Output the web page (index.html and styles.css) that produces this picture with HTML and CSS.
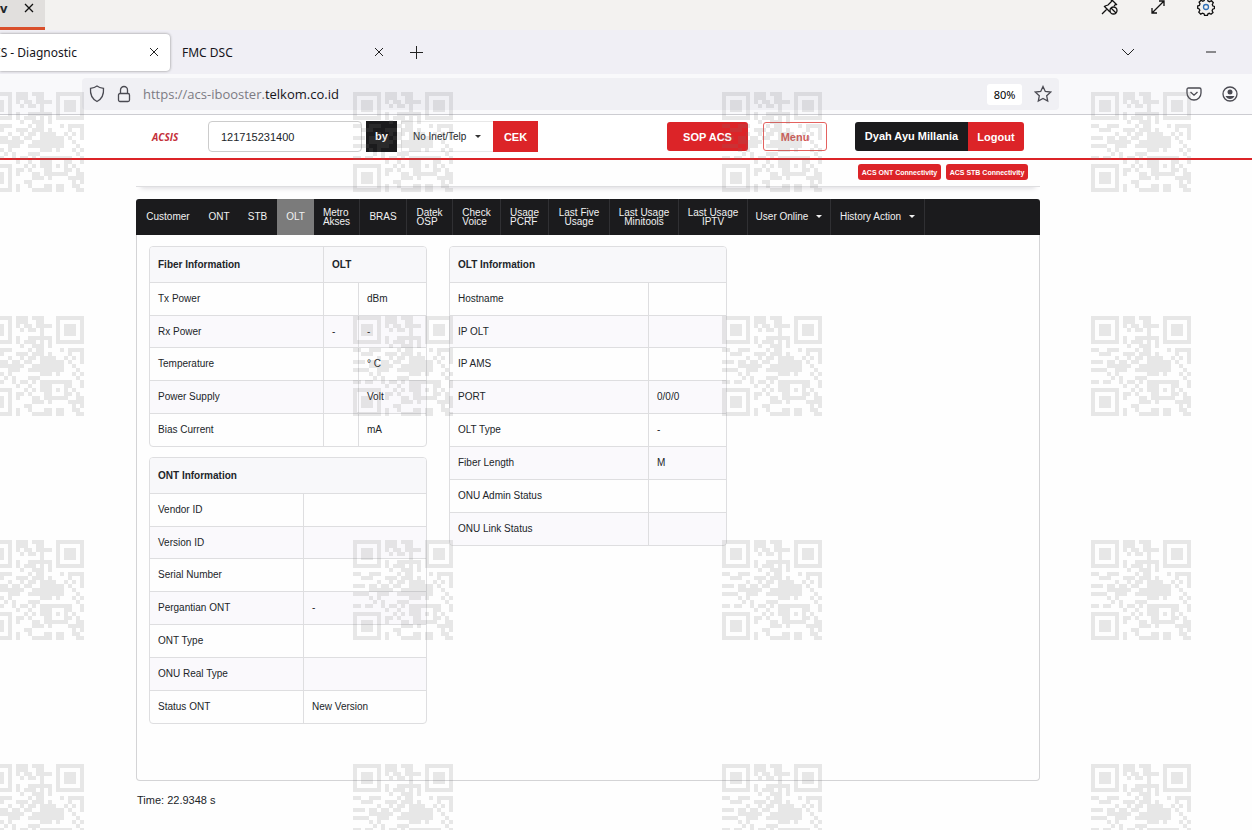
FILE: index.html
```
<!DOCTYPE html>
<html lang="id">
<head>
  <meta charset="UTF-8">
  <meta name="viewport" content="width=device-width, initial-scale=1.0">
  <title>ACSIS - Diagnostic</title>
  <link rel="stylesheet" href="styles.css">
</head>
<body>
  <!-- remote session bar -->
  <div class="session-bar">
    <div class="session-tab">
      <b>v</b>
      <button class="icon-btn" aria-label="Close session"><svg width="10" height="10" viewBox="0 0 10 10"><path d="M1 1l8 8M9 1l-8 8"/></svg></button>
    </div>
    <div class="session-tools">
      <button class="icon-btn" aria-label="Unpin"><svg width="18" height="18" viewBox="0 0 18 18"><path d="M1 16l5-5M3 8l6 6M4 8l3-1 4-4-1-1M10 1l6 6M15 6l-2 2"/><circle cx="12.500" cy="12.500" r="3.500"/><path d="M10 10l5 5"/></svg></button>
      <button class="icon-btn" aria-label="Full screen"><svg width="14" height="14" viewBox="0 0 14 14"><path d="M1 13L13 1M8 1h5v5M1 8v5h5"/></svg></button>
      <button class="icon-btn" aria-label="Settings"><svg width="18" height="18" viewBox="0 0 18 18"><path d="M7.500 1h3l.5 2 1.500.7 2-1 1.800 2-1 1.800.6 1.500 1.600.5v2l-1.800.7-.6 1.500.9 1.800-2 1.700-1.700-.9-1.300.5-.6 1.700h-2.800l-.6-1.800-1.500-.6-1.800 1-1.900-2 1-1.800-.6-1.400-1.500-.5v-2.400l1.700-.6.6-1.500-.9-1.700 2-2 1.700 1 1.400-.6z"/><circle class="blue" cx="9" cy="9" r="2.500"/></svg></button>
    </div>
  </div>

  <div class="tab-bar">
    <div class="tab active">
      <span>SIS - Diagnostic</span>
      <button class="icon-btn" aria-label="Close tab"><svg width="10" height="10" viewBox="0 0 10 10"><path d="M1 1l8 8M9 1l-8 8"/></svg></button>
    </div>
    <div class="tab">
      <span>FMC DSC</span>
      <button class="icon-btn" aria-label="Close tab"><svg width="10" height="10" viewBox="0 0 10 10"><path d="M1 1l8 8M9 1l-8 8"/></svg></button>
    </div>
    <button class="icon-btn new-tab" aria-label="New tab"><svg width="13" height="13" viewBox="0 0 13 13"><path d="M6.500 0v13M0 6.500h13"/></svg></button>
    <button class="icon-btn list-tabs" aria-label="List all tabs"><svg width="14" height="8" viewBox="0 0 14 8"><path d="M1 1l6 6 6-6"/></svg></button>
    <button class="icon-btn minimize" aria-label="Minimize"><svg width="10" height="2" viewBox="0 0 10 2"><path d="M0 1h10"/></svg></button>
  </div>

  <div class="url-bar">
    <div class="url-box">
      <svg width="16" height="18" viewBox="0 0 16 18"><path d="M8 1c2 1.600 4 2 6.500 2.300.5 6.200-1.500 10.700-6.500 13.200C3 14 1 9.500 1.500 3.300 4 3 6 2.600 8 1z"/></svg>
      <svg width="14" height="18" viewBox="0 0 14 18"><rect x="1.500" y="8.500" width="11" height="8" rx="1.500"/><path d="M3.500 8.500V5a3.500 3.500 0 0 1 7 0v3.500"/></svg>
      <span class="url">https://acs-ibooster.<b>telkom.co.id</b></span>
      <button class="zoom-level">80%</button>
      <button class="icon-btn" aria-label="Bookmark"><svg width="18" height="18" viewBox="0 0 18 18"><path d="M9 1.500l2.300 5 5.300.6-3.900 3.700 1 5.300L9 13.500l-4.700 2.600 1-5.300-3.900-3.700 5.300-.6z"/></svg></button>
    </div>
    <button class="icon-btn pocket" aria-label="Pocket"><svg width="16" height="14" viewBox="0 0 16 14"><path d="M2.500 1h11q1.500 0 1.500 1.500V6a7 7 0 0 1-14 0V2.500Q1 1 2.500 1zM4.500 5L8 8.200 11.500 5"/></svg></button>
    <button class="icon-btn" aria-label="Account"><svg width="16" height="16" viewBox="0 0 16 16"><circle cx="8" cy="8" r="7"/><circle class="solid" cx="8" cy="6" r="2.500"/><path class="solid" d="M3.500 10h9Q11 13 8 13t-4.500-3z"/></svg></button>
  </div>

  <header class="app-header">
    <a href="#" class="logo">ACSIS</a>
    <form class="search">
      <input type="text" value="121715231400" aria-label="Nomor">
      <span class="by">by</span>
      <div class="select-wrap">
        <select aria-label="Jenis nomor"><option>No Inet/Telp</option></select>
      </div>
      <button type="button" class="cek">CEK</button>
    </form>
    <button class="btn sop">SOP ACS</button>
    <button class="btn menu">Menu</button>
    <div class="user">
      <span class="user-name">Dyah Ayu Millania</span>
      <button class="logout">Logout</button>
    </div>
  </header>

  <main>
    <div class="status">
      <button>ACS ONT Connectivity</button>
      <button>ACS STB Connectivity</button>
    </div>

    <nav>
      <a href="#" class="w-customer">Customer</a>
      <a href="#" class="w-ont">ONT</a>
      <a href="#" class="w-stb">STB</a>
      <a href="#" class="w-olt current">OLT</a>
      <a href="#" class="w-short line">Metro<br>Akses</a>
      <a href="#" class="w-short line">BRAS</a>
      <a href="#" class="w-short line">Datek<br>OSP</a>
      <a href="#" class="w-mid line">Check<br>Voice</a>
      <a href="#" class="w-mid line">Usage<br>PCRF</a>
      <a href="#" class="w-five line">Last Five<br>Usage</a>
      <a href="#" class="w-last line">Last Usage<br>Minitools</a>
      <a href="#" class="w-last line">Last Usage<br>IPTV</a>
      <a href="#" class="w-online line">User Online <i class="caret"></i></a>
      <a href="#" class="w-history line">History Action <i class="caret"></i></a>
    </nav>

    <section class="panel">
      <div class="column">
        <table>
          <colgroup><col class="c-fiber"><col class="c-value"><col></colgroup>
          <thead><tr><th>Fiber Information</th><th colspan="2">OLT</th></tr></thead>
          <tbody>
            <tr><td>Tx Power</td><td></td><td>dBm</td></tr>
            <tr><td>Rx Power</td><td>-</td><td>-</td></tr>
            <tr><td>Temperature</td><td></td><td>° C</td></tr>
            <tr><td>Power Supply</td><td></td><td>Volt</td></tr>
            <tr><td>Bias Current</td><td></td><td>mA</td></tr>
          </tbody>
        </table>
        <table>
          <colgroup><col class="c-ont"><col></colgroup>
          <thead><tr><th colspan="2">ONT Information</th></tr></thead>
          <tbody>
            <tr><td>Vendor ID</td><td></td></tr>
            <tr><td>Version ID</td><td></td></tr>
            <tr><td>Serial Number</td><td></td></tr>
            <tr><td>Pergantian ONT</td><td>-</td></tr>
            <tr><td>ONT Type</td><td></td></tr>
            <tr><td>ONU Real Type</td><td></td></tr>
            <tr><td>Status ONT</td><td>New Version</td></tr>
          </tbody>
        </table>
      </div>
      <div class="column">
        <table>
          <colgroup><col class="c-olt"><col></colgroup>
          <thead><tr><th colspan="2">OLT Information</th></tr></thead>
          <tbody>
            <tr><td>Hostname</td><td></td></tr>
            <tr><td>IP OLT</td><td></td></tr>
            <tr><td>IP AMS</td><td></td></tr>
            <tr><td>PORT</td><td>0/0/0</td></tr>
            <tr><td>OLT Type</td><td>-</td></tr>
            <tr><td>Fiber Length</td><td>M</td></tr>
            <tr><td>ONU Admin Status</td><td></td></tr>
            <tr><td>ONU Link Status</td><td></td></tr>
          </tbody>
        </table>
      </div>
    </section>
    <p class="time">Time: 22.9348 s</p>
  </main>

  <!-- repeated QR watermark -->
  <svg class="watermark" aria-hidden="true">
    <defs>
      <pattern id="qr" x="-16" y="92" width="369" height="224" patternUnits="userSpaceOnUse">
        <path id="qr-cells" shape-rendering="crispEdges"/>
      </pattern>
    </defs>
    <rect width="100%" height="100%" fill="url(#qr)"/>
  </svg>
  <script src="watermark.js"></script>
</body>
</html>
```
FILE: styles.css
```
* {
  box-sizing: border-box;
}
body {
  margin: 0;
  min-height: 100vh;
  overflow: hidden;
  background: #fefefe;
  color: #212529;
  font-family: "Liberation Sans", Arial, sans-serif;
  font-size: 10px;
}
button {
  font-family: inherit;
  border: 0;
  padding: 0;
}
a {
  color: inherit;
  text-decoration: none;
}
svg {
  fill: none;
  stroke: #4a4a52;
  stroke-width: 1.3;
  flex: none;
}
.icon-btn {
  display: flex;
  background: none;
}

/* remote session bar */
.session-bar {
  height: 30px;
  display: flex;
  justify-content: space-between;
  background: #f3f2f0;
}
.session-bar svg {
  stroke: #111;
}
.session-bar .blue {
  stroke: #2f6fb5;
}
.session-tab {
  width: 45px;
  display: flex;
  justify-content: space-between;
  padding: 3px 11px 0 0;
  background: #e1dfdd;
  border-bottom: 3px solid #d94f2b;
  font-family: "Open Sans", sans-serif;
  font-size: 13px;
  line-height: 11px;
}
.session-tools {
  display: flex;
  align-items: center;
  gap: 32px;
  height: 13px;
  padding-right: 37px;
}

/* browser */
.tab-bar {
  height: 44px;
  display: flex;
  align-items: center;
  background: #f0eff5;
  font-family: "Noto Sans", sans-serif;
  font-size: 12px;
  color: #15141a;
}
.tab {
  width: 214px;
  display: flex;
  align-items: center;
  justify-content: space-between;
  padding-left: 12px;
}
.tab.active {
  width: 170px;
  height: 37px;
  padding: 0 11px 0 0;
  background: #fff;
  border-radius: 0 4px 4px 0;
  box-shadow: 0 0 3px #888;
}
.tab.active span {
  margin-left: -10px;
}
.tab-bar svg {
  stroke: #222;
  stroke-width: 1;
}
.new-tab {
  margin-left: 26px;
}
.list-tabs {
  margin-left: auto;
}
.minimize {
  margin: 0 36px 0 71px;
}
.url-bar {
  height: 41px;
  display: flex;
  align-items: center;
  padding: 0 14px 0 82px;
  background: #f9f9fb;
  border-bottom: 1px solid #ccccd1;
}
.url-box {
  flex: 1;
  height: 32px;
  display: flex;
  align-items: center;
  gap: 12px;
  padding: 0 7px;
  background: #f0f0f4;
  border-radius: 4px;
}
.url {
  flex: 1;
  font-family: "Open Sans", sans-serif;
  font-size: 13px;
  color: #7c7b83;
}
.url b {
  font-weight: normal;
  color: #15141a;
}
.zoom-level {
  width: 35px;
  height: 21px;
  background: #fff;
  border-radius: 3px;
  font-family: "Noto Sans", sans-serif;
  font-size: 11px;
}
.pocket {
  margin: 0 20px 0 127px;
}
svg .solid {
  fill: #4a4a52;
  stroke: none;
}

/* header */
.app-header {
  height: 45px;
  display: flex;
  align-items: center;
  padding: 0 228px 0 152px;
  background: #fff;
  border-bottom: 2px solid #dc2428;
}
.logo {
  width: 56px;
  color: #c4303a;
  font-family: "Open Sans", sans-serif;
  font-size: 10px;
  font-weight: bold;
  font-style: italic;
}
.search {
  display: flex;
  height: 31px;
}
.search input {
  width: 154px;
  padding: 0 12px;
  border: 1px solid #ccc;
  border-radius: 4px;
  background: #fff;
  font-family: inherit;
  font-size: 11px;
  color: #212529;
}
.by {
  width: 31px;
  margin: 0 4px;
  background: #1b1b1d;
  color: #fff;
  font-size: 11px;
  font-weight: bold;
  line-height: 30px;
  text-align: center;
}
.select-wrap {
  width: 92px;
  display: flex;
  align-items: center;
  border: 1px solid #e8e8e8;
  border-right: 0;
}
.select-wrap::after {
  content: "";
  margin-left: -18px;
  border: 3px solid transparent;
  border-top-color: #333;
  border-bottom: 0;
  pointer-events: none;
}
.search select {
  appearance: none;
  width: 91px;
  padding: 0 11px;
  border: 0;
  background: none;
  font-family: inherit;
  font-size: 10px;
  color: #212529;
}
.cek {
  width: 45px;
  background: #dc2428;
  color: #fff;
  font-size: 11px;
  font-weight: bold;
}
.btn {
  height: 29px;
  border-radius: 3px;
  font-size: 11px;
  font-weight: bold;
}
.sop {
  width: 81px;
  margin-left: auto;
  background: #dc2428;
  color: #fff;
}
.menu {
  width: 64px;
  margin: 0 28px 0 15px;
  background: #fff;
  border: 1px solid #e4625f;
  color: #d65c58;
}
.user {
  display: flex;
  height: 29px;
  border-radius: 3px;
  overflow: hidden;
  color: #fff;
  font-size: 11px;
  font-weight: bold;
}
.user-name {
  width: 113px;
  background: #1b1b1d;
  line-height: 29px;
  text-align: center;
}
.logout {
  width: 56px;
  background: #dc2428;
  color: inherit;
  font-size: inherit;
  font-weight: inherit;
}

/* content */
main {
  margin: 0 212px 0 136px;
}
.status {
  height: 27px;
  display: flex;
  justify-content: flex-end;
  gap: 5px;
  padding: 4px 12px 0 0;
  border-bottom: 1px solid #dedee0;
  box-shadow: 0 6px 5px -5px #d9d7dc;
}
.status button {
  width: 83px;
  height: 16px;
  background: #dc2428;
  border-radius: 3px;
  color: #fff;
  font-size: 7px;
  font-weight: bold;
  white-space: nowrap;
}
.status button:last-child {
  width: 82px;
}
nav {
  height: 36px;
  margin-top: 12px;
  display: flex;
  background: #1b1b1d;
  border-radius: 3px 3px 0 0;
  color: #f1f1f1;
  line-height: 9px;
}
nav a {
  display: flex;
  align-items: center;
  justify-content: center;
  padding-bottom: 1px;
  white-space: nowrap;
}
nav .line {
  border-right: 1px solid #303033;
}
nav .current {
  background: #7b7b7b;
}
.w-customer { width: 64px; }
.w-ont { width: 38px; }
.w-stb { width: 39px; }
.w-olt { width: 37px; }
.w-short { width: 46px; }
.w-short + .w-short { width: 47px; }
.w-short + .w-short + .w-short { width: 46px; }
.w-mid { width: 48px; }
.w-five { width: 61px; text-align: center; }
.w-last { width: 69px; text-align: center; }
.w-online { width: 83px; }
.w-history { width: 94px; }
.caret {
  margin-left: 8px;
  border: 3px solid transparent;
  border-top-color: #f1f1f1;
  border-bottom: 0;
}
.panel {
  display: flex;
  gap: 22px;
  padding: 11px 12px 56px;
  border: 1px solid #d4d4d6;
  border-top: 0;
  border-radius: 0 0 4px 4px;
}
.column {
  width: 278px;
}
table {
  width: 100%;
  margin-bottom: 10px;
  table-layout: fixed;
  border: 1px solid #dedee0;
  border-radius: 4px;
  border-spacing: 0;
  overflow: hidden;
}
.column table:last-child {
  margin-bottom: 0;
}
th, td {
  height: 33px;
  padding: 0 8px 1px;
  text-align: left;
}
th {
  height: 35px;
  padding-bottom: 0;
  background: #f8f8fa;
}
td {
  border-top: 1px solid #dedee0;
}
th + th, td + td {
  border-left: 1px solid #dedee0;
}
tbody tr:nth-child(even) {
  background: #faf9fc;
}
tbody tr:nth-child(2) td {
  height: 32px;
}
.c-fiber { width: 173px; }
.c-value { width: 35px; }
.c-ont { width: 153px; }
.c-olt { width: 198px; }
.time {
  margin: 13px 1px;
  font-size: 11px;
  line-height: 13px;
}

.watermark {
  position: absolute;
  top: 0;
  left: 0;
  width: 100%;
  height: 100%;
  pointer-events: none;
  stroke: none;
}
#qr-cells {
  fill: rgba(115, 115, 115, 0.165);
}
```
FILE: watermark.js
```
const cells = [
  "1111111011101110001111111",
  "1000001011100110001000001",
  "1011101010110111101011101",
  "1011101001011010001011101",
  "1011101000000010001011101",
  "1000001010011111101000001",
  "1111111010111010101111111",
  "0000000001001110100000000",
  "1100111000010110000101111",
  "0011100011101110100001001",
  "0000001001011011110010101",
  "1110110110110011111101001",
  "0000111111001111111100100",
  "1111001110011111111100010",
  "0000101000000011101000101",
  "0000010100011100000000010",
  "1101100101101011111111001",
  "0000000010010011100011001",
  "1111111000101011101010100",
  "1000001011010001100011010",
  "1011101010001101111110011",
  "1011101000001110100001111",
  "1011101000110000000000101",
  "1000001010010001101100110",
  "1111111010001111101100011"
];

const size = 4;
let d = "";
cells.forEach((row, y) => {
  [...row].forEach((cell, x) => {
    if (cell === "1") d += `M${x * size} ${y * size}h${size}v${size}h-${size}z`;
  });
});
document.getElementById("qr-cells").setAttribute("d", d);
```
